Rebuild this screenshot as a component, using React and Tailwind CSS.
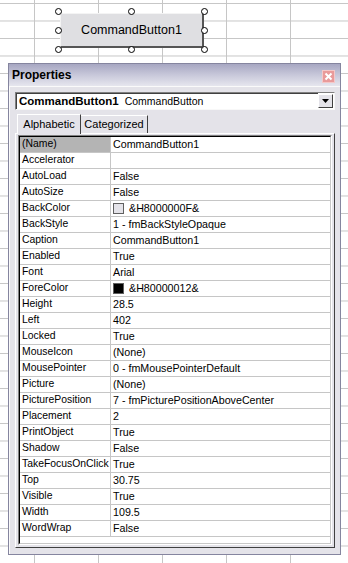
import React from "react";

const rows = [
  ["(Name)", "CommandButton1"],
  ["Accelerator", ""],
  ["AutoLoad", "False"],
  ["AutoSize", "False"],
  ["BackColor", "&H8000000F&", "light"],
  ["BackStyle", "1 - fmBackStyleOpaque"],
  ["Caption", "CommandButton1"],
  ["Enabled", "True"],
  ["Font", "Arial"],
  ["ForeColor", "&H80000012&", "dark"],
  ["Height", "28.5"],
  ["Left", "402"],
  ["Locked", "True"],
  ["MouseIcon", "(None)"],
  ["MousePointer", "0 - fmMousePointerDefault"],
  ["Picture", "(None)"],
  ["PicturePosition", "7 - fmPicturePositionAboveCenter"],
  ["Placement", "2"],
  ["PrintObject", "True"],
  ["Shadow", "False"],
  ["TakeFocusOnClick", "True"],
  ["Top", "30.75"],
  ["Visible", "True"],
  ["Width", "109.5"],
  ["WordWrap", "False"],
];

function Handle({ x, y }) {
  return (
    <div
      className="absolute w-[7px] h-[7px] rounded-full border border-black bg-white"
      style={{ left: x - 3.5, top: y - 3.5 }}
    />
  );
}

export default function App() {
  const handles = [
    [58, 11], [131, 11], [204, 11],
    [58, 30], [204, 30],
    [58, 49], [131, 49], [204, 49],
  ];
  return (
    <div
      className="relative w-[348px] h-[563px] overflow-hidden bg-white bg-[linear-gradient(to_right,#c6c6c6_1px,transparent_1px),linear-gradient(to_bottom,#c6c6c6_1px,transparent_1px)] bg-[size:64px_100%,100%_17.5px] bg-[position:34px_0,0_3px]"
      style={{ fontFamily: '"Liberation Sans", Arial, sans-serif' }}
    >
      {/* command button on sheet */}
      <div className="absolute left-[60px] top-[13px] w-[144px] h-[35px] bg-[#dfdfe2] border-r-2 border-b-2 border-r-[#555] border-b-[#555] border-t border-l border-t-[#f4f4f4] border-l-[#f4f4f4] flex items-center justify-center text-[12.5px] text-black">
        CommandButton1
      </div>
      {handles.map(([x, y], i) => (
        <Handle key={i} x={x} y={y} />
      ))}

      {/* Properties window */}
      <div className="absolute left-[8px] top-[63px] w-[333px] h-[492px] border border-[#85859f] bg-[#e4e3e9] flex flex-col">
        <div className="h-[22px] shrink-0 bg-gradient-to-b from-[#a7a7c2] via-[#c8c8da] to-[#e6e6ee] flex items-center justify-between pl-[3px] pr-[5px]">
          <span className="text-[12px] font-bold text-black leading-none">Properties</span>
          <div className="w-[13px] h-[13px] mt-[2px] bg-[#e99a9a] border border-[#f4c8c8] flex items-center justify-center">
            <svg width="9" height="9" viewBox="0 0 9 9">
              <path d="M1.5 1.5 L7.5 7.5 M7.5 1.5 L1.5 7.5" stroke="#fff" strokeWidth="2" />
            </svg>
          </div>
        </div>
        <div className="flex-1 flex flex-col px-[5px] pt-[5px] pb-[6px] border-l border-t border-[#fafafa]">
          {/* dropdown */}
          <div className="h-[18px] shrink-0 bg-white border border-t-[#808080] border-l-[#808080] border-r-[#f8f8f8] border-b-[#f8f8f8] flex items-center">
            <div className="flex-1 flex items-center gap-[6px] pl-[2px] border-t border-l border-t-[#404040] border-l-[#404040] h-full">
              <span className="text-[11.5px] font-bold text-black">CommandButton1</span>
              <span className="text-[10.5px] text-black">CommandButton</span>
            </div>
            <div className="w-[15px] h-[14px] mr-[1px] bg-[#e4e3e9] border border-t-white border-l-white border-r-[#404040] border-b-[#404040] flex items-center justify-center">
              <svg width="7" height="4" viewBox="0 0 7 4">
                <path d="M0 0 H7 L3.5 4 Z" fill="#000" />
              </svg>
            </div>
          </div>
          {/* tabs */}
          <div className="mt-[3px] h-[20px] shrink-0 flex items-end pl-[2px]">
            <div className="h-[20px] w-[64px] bg-[#e4e3e9] border-l border-t border-r border-l-white border-t-white border-r-[#404040] flex items-center justify-center text-[11px] text-black relative top-[1px] z-10">
              Alphabetic
            </div>
            <div className="h-[18px] w-[67px] bg-[#e4e3e9] border-t border-r border-t-white border-r-[#404040] flex items-center justify-center text-[11px] text-black">
              Categorized
            </div>
          </div>
          {/* panel */}
          <div className="flex-1 flex flex-col border border-l-white border-t-white border-r-[#404040] border-b-[#404040] px-[2px] pt-[1px] pb-[2px]">
            <div className="flex-1 border border-t-[#808080] border-l-[#808080] border-r-white border-b-white">
              <div className="h-full border border-t-[#000] border-l-[#000] border-r-[#c8c8c8] border-b-[#c8c8c8] bg-white flex flex-col">
                {rows.map(([name, value, swatch], i) => (
                  <div key={i} className="h-[16px] shrink-0 flex border-b border-[#c6c6c6] text-black leading-none">
                    <div className={`w-[91px] shrink-0 border-r border-[#c6c6c6] flex items-center pl-[2px] text-[10.4px] whitespace-nowrap overflow-hidden ${i === 0 ? "bg-[#b4b4b4]" : ""}`}>
                      {name}
                    </div>
                    <div className="flex-1 flex items-center pl-[2px] whitespace-nowrap overflow-hidden text-[10.7px]">
                      {swatch === "light" && (
                        <span className="w-[11px] h-[11px] border border-[#606060] bg-[#e4e3e9] mr-[5px] inline-block" />
                      )}
                      {swatch === "dark" && (
                        <span className="w-[11px] h-[11px] border border-[#606060] bg-black mr-[5px] inline-block" />
                      )}
                      {value}
                    </div>
                  </div>
                ))}
              </div>
            </div>
          </div>
        </div>
      </div>
    </div>
  );
}
